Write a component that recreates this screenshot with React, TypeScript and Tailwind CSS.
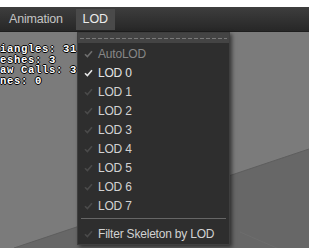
import React from "react";

const items = [
  { label: "AutoLOD", state: "disabled" },
  { label: "LOD 0", state: "checked" },
  { label: "LOD 1", state: "off" },
  { label: "LOD 2", state: "off" },
  { label: "LOD 3", state: "off" },
  { label: "LOD 4", state: "off" },
  { label: "LOD 5", state: "off" },
  { label: "LOD 6", state: "off" },
  { label: "LOD 7", state: "off" },
];

const stats = ["iangles: 31", "eshes: 3", "aw Calls: 3", "nes: 0"];

function Check({ color }: { color: string }) {
  return (
    <svg width="9" height="8" viewBox="0 0 9 8" className="shrink-0">
      <path d="M1 4.2 L3.4 6.6 L8 1.2" fill="none" stroke={color} strokeWidth="1.6" />
    </svg>
  );
}

function MenuRow({ label, state }: { label: string; state: string }) {
  const checkColor = state === "checked" ? "#e6e6e6" : state === "disabled" ? "#6e6e6e" : "#4a4a4a";
  const textColor = state === "disabled" ? "text-[#878787]" : state === "checked" ? "text-[#e4e4e4]" : "text-[#d2d2d2]";
  return (
    <div className="flex items-center h-[19px] pl-[6px]">
      <Check color={checkColor} />
      <span className={`ml-[5px] text-[12px] tracking-[-0.2px] ${textColor}`}>{label}</span>
    </div>
  );
}

export default function App() {
  return (
    <div className="w-[309px] h-[248px] relative overflow-hidden bg-white font-['Liberation_Sans',Arial,sans-serif]">
      <div className="h-[7px] bg-white" />
      <div className="h-[25px] bg-gradient-to-b from-[#3e3e3e] to-[#272727] border-b border-[#1e1e1e] flex items-center">
        <span className="ml-[9px] text-[12.5px] tracking-[-0.2px] text-[#c4c4c4]">Animation</span>
        <div className="ml-[13px] mt-[1px] w-[39px] h-[21px] bg-[#4a4a4a] flex items-center justify-center">
          <span className="text-[12.5px] text-[#ececec]">LOD</span>
        </div>
      </div>

      <div className="relative h-[216px] bg-[#7b7b7b]">
        <svg width="309" height="216" className="absolute inset-0">
          <polygon points="14,216 309,117 309,216" fill="#676767" />
          <line x1="14" y1="216" x2="309" y2="117" stroke="#5e5e5e" strokeWidth="1" />
          <line x1="240" y1="200" x2="309" y2="230" stroke="#6d6d6d" strokeWidth="1" />
        </svg>
        <div className="relative pt-[12px] font-['Liberation_Mono',monospace] font-bold text-[10.6px] tracking-[0.64px] leading-[10.7px] text-white [text-shadow:1px_0_0_#000,-1px_0_0_#000,0_1px_0_#000,0_-1px_0_#000]">
          {stats.map((s) => (
            <div key={s} className="whitespace-pre">{s}</div>
          ))}
        </div>
      </div>

      <div className="absolute left-[77px] top-[32px] w-[153px] h-[213px] bg-[#2e2e2e] border border-[#3f3f3f] shadow-[2px_2px_4px_rgba(0,0,0,0.55)]">
        <div className="h-[10px] bg-[#444444] flex items-center px-[2px]">
          <div className="h-[1px] w-full bg-[repeating-linear-gradient(90deg,#7a7a7a_0_4px,transparent_4px_6px)]" />
        </div>
        <div className="pt-[1px]">
          {items.map((it) => (
            <MenuRow key={it.label} label={it.label} state={it.state} />
          ))}
        </div>
        <div className="mt-[3px] mb-[5px] mx-[3px] h-[1px] bg-[#666666]" />
        <MenuRow label="Filter Skeleton by LOD" state="off" />
      </div>
    </div>
  );
}
